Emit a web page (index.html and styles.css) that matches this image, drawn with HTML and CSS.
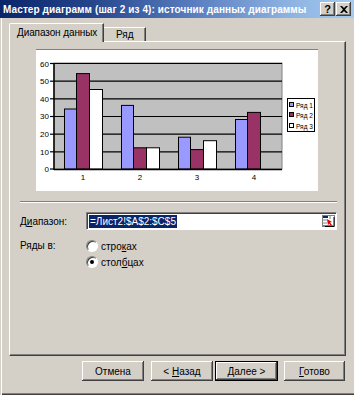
FILE: index.html
```html
<!DOCTYPE html>
<html>
<head>
<meta charset="utf-8">
<link rel="stylesheet" href="styles.css">
</head>
<body>
<div class="window">
  <div class="titlebar">
    <span class="title">Мастер диаграмм (шаг 2 из 4): источник данных диаграммы</span>
    <div class="tbtns">
      <span class="tbtn help">?</span>
      <span class="tbtn close"><svg width="8" height="7" viewBox="0 0 8 7"><path d="M0 0h2l2 2 2-2h2L5 3.5 8 7H6L4 5 2 7H0l3-3.5z" fill="#000"/></svg></span>
    </div>
  </div>
  <div class="content">
    <div class="tabs">
      <div class="tab active">Диапазон данных</div>
      <div class="tab">Ряд</div>
    </div>
    <div class="panel">
      <div class="chart">
        <svg width="282" height="141" viewBox="0 0 282 141" class="chart-svg">
          <rect x="18" y="13" width="228" height="106" fill="#C0C0C0" stroke="#808080" stroke-width="1"/>
          <g stroke="#000" stroke-width="1.2">
            <line x1="18" y1="13.5" x2="246" y2="13.5"/>
            <line x1="18" y1="31.2" x2="246" y2="31.2"/>
            <line x1="18" y1="48.8" x2="246" y2="48.8"/>
            <line x1="18" y1="66.5" x2="246" y2="66.5"/>
            <line x1="18" y1="84.2" x2="246" y2="84.2"/>
            <line x1="18" y1="101.8" x2="246" y2="101.8"/>
            <line x1="14" y1="13.5" x2="18" y2="13.5"/>
            <line x1="14" y1="31.2" x2="18" y2="31.2"/>
            <line x1="14" y1="48.8" x2="18" y2="48.8"/>
            <line x1="14" y1="66.5" x2="18" y2="66.5"/>
            <line x1="14" y1="84.2" x2="18" y2="84.2"/>
            <line x1="14" y1="101.8" x2="18" y2="101.8"/>
            <line x1="14" y1="119" x2="18" y2="119"/>
          </g>
          <g stroke="#000" stroke-width="1">
            <rect x="28.5" y="59" width="12" height="60" fill="#9999FF"/>
            <rect x="40.5" y="23.6" width="13" height="95.4" fill="#993366"/>
            <rect x="53.5" y="39.5" width="13" height="79.5" fill="#FFFFFF"/>
            <rect x="85.5" y="55.4" width="12" height="63.6" fill="#9999FF"/>
            <rect x="97.5" y="97.8" width="13" height="21.2" fill="#993366"/>
            <rect x="110.5" y="97.8" width="13" height="21.2" fill="#FFFFFF"/>
            <rect x="142.5" y="87.2" width="12" height="31.8" fill="#9999FF"/>
            <rect x="154.5" y="99.6" width="13" height="19.4" fill="#993366"/>
            <rect x="167.5" y="90.7" width="13" height="28.3" fill="#FFFFFF"/>
            <rect x="199.5" y="69.5" width="12" height="49.5" fill="#9999FF"/>
            <rect x="211.5" y="62.4" width="13" height="56.6" fill="#993366"/>
          </g>
          <g stroke="#000" stroke-width="1.5">
            <line x1="18" y1="13" x2="18" y2="120"/>
            <line x1="18" y1="119.5" x2="246" y2="119.5"/>
          </g>
          <g class="ylab" text-anchor="end">
            <text x="13" y="16.5">60</text>
            <text x="13" y="34">50</text>
            <text x="13" y="51.5">40</text>
            <text x="13" y="69">30</text>
            <text x="13" y="87">20</text>
            <text x="13" y="104.5">10</text>
            <text x="13" y="122">0</text>
          </g>
          <g class="xlab" text-anchor="middle">
            <text x="47" y="130">1</text>
            <text x="104" y="130">2</text>
            <text x="161" y="130">3</text>
            <text x="218" y="130">4</text>
          </g>
          <rect x="251.5" y="48.5" width="27" height="33" fill="#FFFFFF" stroke="#000" stroke-width="1"/>
          <g stroke="#000" stroke-width="1">
            <rect x="253.5" y="52.5" width="4" height="4" fill="#9999FF"/>
            <rect x="253.5" y="62.5" width="4" height="4" fill="#993366"/>
            <rect x="253.5" y="73.5" width="4" height="4" fill="#FFFFFF"/>
          </g>
          <g class="leg">
            <text x="260" y="57.5">Ряд 1</text>
            <text x="260" y="67.5">Ряд 2</text>
            <text x="260" y="78.5">Ряд 3</text>
          </g>
        </svg>
      </div>
      <div class="sep"></div>
      <div class="row range-row">
        <span class="label">Д<u>и</u>апазон:</span>
        <div class="input">
          <span class="sel">=Лист2!$A$2:$C$5</span>
          <span class="pick"><svg width="13" height="12" viewBox="0 0 13 12"><rect x="0.5" y="0.5" width="12" height="11" fill="#fff" stroke="#808080"/><rect x="1" y="1" width="5" height="2" fill="#0A246A"/><path d="M1 5h4M1 8h4M1 10.5h10M8 1v3" stroke="#808080"/><path d="M5 4l5 3-2 .5 2 2.5-1 1-2-2.5-1 2z" fill="#E00000"/><path d="M12 2v9M3 11.5h9" stroke="#000"/></svg></span>
        </div>
      </div>
      <div class="row series-row">
        <span class="label">Ряды в:</span>
        <div class="radios">
          <label class="opt"><span class="radio"></span><span>стро<u>к</u>ах</span></label>
          <label class="opt"><span class="radio checked"></span><span>стол<u>б</u>цах</span></label>
        </div>
      </div>
    </div>
    <div class="buttons">
      <span class="btn b1"><span>Отмена</span></span>
      <span class="btn b2"><span>&lt; <u>Н</u>азад</span></span>
      <span class="btn b3 default"><span><u>Д</u>алее &gt;</span></span>
      <span class="btn b4"><span><u>Г</u>отово</span></span>
    </div>
  </div>
</div>
</body>
</html>
```

FILE: styles.css
```css
html, body {
  margin: 0;
  padding: 0;
}
body {
  width: 354px;
  height: 395px;
  overflow: hidden;
  background: #D4D0C8;
  font-family: "Liberation Sans", Arial, sans-serif;
  font-size: 10px;
  color: #000;
}
.window {
  box-sizing: border-box;
  width: 354px;
  height: 395px;
  background: #D4D0C8;
  box-shadow: inset 1px 0 0 #D4D0C8, inset 2px 0 0 #FFFFFF, inset 0 -1px 0 #404040, inset 0 -2px 0 #808080;
  display: flex;
  flex-direction: column;
}
.titlebar {
  height: 18px;
  display: flex;
  align-items: center;
  justify-content: space-between;
  background: linear-gradient(90deg, #0A246A 0%, #24448A 25%, #5A7EC0 55%, #8AB0E0 80%, #A6CAF0 100%);
  padding: 0 3px 0 3px;
}
.title {
  color: #fff;
  font-weight: bold;
  font-size: 10px;
  white-space: nowrap;
  letter-spacing: 0.1px;
}
.tbtns {
  display: flex;
  gap: 1px;
}
.tbtn {
  box-sizing: border-box;
  width: 15px;
  height: 14px;
  background: #D4D0C8;
  box-shadow: inset -1px -1px 0 #404040, inset 1px 1px 0 #FFFFFF, inset -2px -2px 0 #808080;
  display: flex;
  align-items: center;
  justify-content: center;
  font-weight: bold;
  font-size: 11px;
  line-height: 1;
}
.content {
  padding: 5px 8px 0 9px;
}
.tabs {
  display: flex;
  align-items: flex-end;
  height: 18px;
}
.tab {
  box-sizing: border-box;
  height: 14px;
  display: flex;
  align-items: center;
  border-top: 1px solid #fff;
  border-left: 1px solid #fff;
  border-right: 1px solid #404040;
  border-top-left-radius: 2px;
  box-shadow: inset -1px 0 0 #808080;
  white-space: nowrap;
}
.tab.active {
  height: 19px;
  width: 95px;
  padding: 0 0 2px 7px;
  margin-bottom: -1px;
  background: #D4D0C8;
  position: relative;
  z-index: 1;
  letter-spacing: -0.1px;
}
.tab:not(.active) {
  width: 43px;
  padding: 0 0 0 12px;
  margin-left: -1px;
}
.panel {
  box-sizing: border-box;
  height: 315px;
  border-top: 1px solid #fff;
  border-left: 1px solid #fff;
  border-right: 1px solid #404040;
  border-bottom: 1px solid #404040;
  box-shadow: inset -1px -1px 0 #808080;
  padding: 7px 0 0 26px;
}
.chart {
  width: 282px;
  height: 141px;
  background: #FFFFFF;
  border-top: 1px solid #808080;
}
.chart-svg {
  display: block;
}
.ylab text, .xlab text {
  font-family: "Liberation Sans", Arial, sans-serif;
  font-size: 8px;
}
.leg text {
  font-family: "Liberation Sans", Arial, sans-serif;
  font-size: 6.5px;
}
.sep {
  margin: 10px 0 0 -16px;
  width: 317px;
  height: 1px;
  background: #808080;
  border-bottom: 1px solid #fff;
}
.row {
  display: flex;
  margin-left: -16px;
}
.label {
  width: 66px;
}
.range-row {
  margin-top: 9px;
  align-items: center;
  height: 18px;
}
.input {
  box-sizing: border-box;
  width: 251px;
  height: 18px;
  background: #fff;
  border-top: 1px solid #808080;
  border-left: 1px solid #808080;
  border-right: 1px solid #fff;
  border-bottom: 1px solid #fff;
  box-shadow: inset 1px 1px 0 #404040;
  display: flex;
  align-items: center;
  justify-content: space-between;
  padding: 0 1px 0 2px;
}
.sel {
  background: #0A246A;
  color: #fff;
  line-height: 13px;
  padding: 0 1px;
}
.pick {
  display: flex;
}
.pick svg {
  display: block;
}
.series-row {
  margin-top: 10px;
}
.radios {
  display: flex;
  flex-direction: column;
  gap: 4px;
}
.opt {
  display: flex;
  align-items: center;
  gap: 3px;
  height: 12px;
}
.radio {
  box-sizing: border-box;
  width: 12px;
  height: 12px;
  border-radius: 50%;
  background: #fff;
  border: 1px solid;
  border-color: #808080 #fff #fff #808080;
  box-shadow: inset 1px 1px 0 #404040;
  position: relative;
}
.radio.checked::after {
  content: "";
  position: absolute;
  left: 3px;
  top: 3px;
  width: 4px;
  height: 4px;
  border-radius: 50%;
  background: #000;
}
.buttons {
  display: flex;
  margin-top: 5px;
  padding-left: 73px;
}
.btn {
  box-sizing: border-box;
  width: 62px;
  height: 20px;
  display: flex;
  align-items: center;
  justify-content: center;
  background: #D4D0C8;
  box-shadow: inset -1px -1px 0 #404040, inset 1px 1px 0 #FFFFFF, inset -2px -2px 0 #808080;
  white-space: pre;
}
.b1 { margin-right: 7px; }
.b2 { margin-right: 2px; }
.b3 { width: 63px; margin-right: 6px; }
.b4 { width: 61px; }
.btn.default {
  border: 1px solid #000;
}
```
